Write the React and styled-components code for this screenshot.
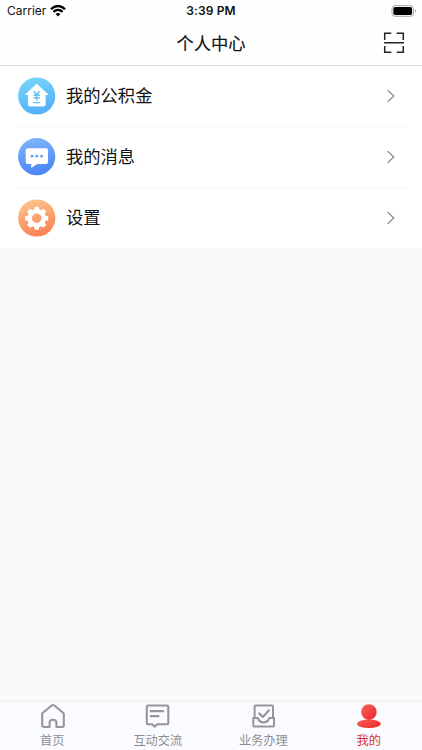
import React from 'react'
import styled, { createGlobalStyle } from 'styled-components';

const GlobalStyle = createGlobalStyle`
    * {
        box-sizing: border-box;
    }
    body {
        margin: 0;
        font-family: Inter, "Noto Sans CJK SC", sans-serif;
        background-color: #fafafa;
    }
    svg {
        display: block;
        flex-shrink: 0;
    }
`;

const Screen = styled.div`
    display: flex;
    flex-direction: column;
    height: 100vh;
    overflow: hidden;
    background-color: #fafafa;
`;

const Header = styled.header`
    height: 66px;
    background-color: #fefefe;
    border-bottom: 1px solid #dcdcdc;
`;

const StatusBar = styled.div`
    display: grid;
    grid-template-columns: 1fr auto 1fr;
    align-items: center;
    height: 22px;
    padding: 0 5px 0 7px;
    color: #111;
    font-size: 12px;
    line-height: 22px;
`;

const Carrier = styled.div`
    display: flex;
    align-items: center;
    gap: 4px;
`;

const Clock = styled.div`
    margin-right: 2px;
    font-weight: 600;
    letter-spacing: 0.15px;
`;

const BatteryWrap = styled.div`
    display: flex;
    justify-content: flex-end;
`;

const NavBar = styled.div`
    display: grid;
    grid-template-columns: 1fr auto 1fr;
    align-items: center;
    height: 43px;
    padding: 0 17px;
    h1 {
        grid-column: 2;
        margin: 0;
        font-size: 17.3px;
        font-weight: 400;
        line-height: 43px;
        color: #111;
        -webkit-text-stroke: 0.15px #111;
    }
    svg {
        justify-self: end;
        margin-bottom: 1px;
    }
`;

const Menu = styled.main`
    flex: 1;
`;

const MenuRow = styled.div`
    display: flex;
    align-items: center;
    height: ${props => props.$last ? '60px' : '61px'};
    margin-left: 18px;
    margin-right: 17px;
    padding-bottom: ${props => props.$last ? '1px' : '0'};
    border-bottom: ${props => props.$last ? 'none' : '1px solid #f5f5f5'};
    span {
        flex: 1;
        margin-left: 10px;
        font-size: 17.3px;
        line-height: 26px;
        color: #111;
    }
`;

const MenuList = styled.div`
    background-color: #fff;
`;

const TabBar = styled.nav`
    display: grid;
    grid-template-columns: repeat(4, 1fr);
    height: 50px;
    border-top: 2px solid #f1f1f3;
    background-color: #fafbfe;
`;

const Tab = styled.div`
    display: flex;
    flex-direction: column;
    align-items: center;
    padding: 1px 1px 0 0;
    font-size: 12.2px;
    line-height: 18px;
    color: ${props => props.$active ? '#d62f2f' : '#8e8e90'};
    svg {
        margin: 0 -1px 3px 0;
    }
`;

function WifiIcon() {
    return (
        <svg width="16" height="12" viewBox="0 0 16 12" fill="none" stroke="#000" strokeWidth="2.3">
            <path d="M1 4.2C5-.1 11-.1 15 4.2" />
            <path d="M3.5 6.9C6.1 4.2 9.9 4.2 12.5 6.9" />
            <path d="M8 11.4L5.6 9C7 7.7 9 7.7 10.4 9Z" fill="#000" stroke="none" />
        </svg>
    )
}

function BatteryIcon() {
    return (
        <svg width="26" height="12" viewBox="0 0 26 12">
            <rect x="1" y="0.7" width="21.5" height="10.6" rx="3" fill="#fff" stroke="#a6a6a6" />
            <rect x="2.4" y="2.1" width="18.7" height="7.8" rx="1.7" fill="#000" />
            <path d="M24 4.2C25.4 4.8 25.4 7.2 24 7.8Z" fill="#a6a6a6" />
        </svg>
    )
}

function ScanIcon() {
    return (
        <svg width="22" height="22" viewBox="0 0 22 22" fill="none" stroke="#222" strokeWidth="1.5">
            <path d="M1.7 8V1.2H8.3M13.7 1.2H20.3V8M1.7 14V20.3H8.3M13.7 20.3H20.3V14M1 10.7H21" />
        </svg>
    )
}

function FundIcon() {
    return (
        <svg width="38" height="38" viewBox="0 0 38 38">
            <defs>
                <linearGradient id="fund" x1="0" y1="0" x2="0.3" y2="1">
                    <stop offset="0" stopColor="#78d8f8" />
                    <stop offset="1" stopColor="#55b2f8" />
                </linearGradient>
            </defs>
            <circle cx="18.7" cy="19" r="18.6" fill="url(#fund)" />
            <path d="M18.7 7.2L30 17.4H27.2V27.4Q27.2 29 25.6 29H12Q10.4 29 10.4 27.4V17.4H7.6Z" fill="#fff" stroke="#fff" strokeWidth="0.8" strokeLinejoin="round" />
            <path d="M15.8 14.3L18.7 17.8L21.6 14.3M18.7 17.8V23.4M15.5 18.3H21.9M15.5 20.8H21.9M15 25.6H22.4" fill="none" stroke="#62c0f5" strokeWidth="1.4" />
        </svg>
    )
}

function MessageIcon() {
    return (
        <svg width="38" height="38" viewBox="0 0 38 38">
            <defs>
                <linearGradient id="message" x1="0" y1="0" x2="0.2" y2="1">
                    <stop offset="0" stopColor="#80b8fb" />
                    <stop offset="1" stopColor="#4c87f6" />
                </linearGradient>
            </defs>
            <circle cx="18.7" cy="18.7" r="18.6" fill="url(#message)" />
            <path d="M9.7 10.2H28Q30 10.2 30 12.2V23.9Q30 25.9 28 25.9H19.3L13.2 29.9V25.9H9.7Q7.7 25.9 7.7 23.9V12.2Q7.7 10.2 9.7 10.2Z" fill="#fff" />
            <g fill="#659ef8">
                <circle cx="14" cy="18.2" r="1.4" />
                <circle cx="18.8" cy="18.2" r="1.4" />
                <circle cx="23.6" cy="18.2" r="1.4" />
            </g>
        </svg>
    )
}

const TEETH = [0, 45, 90, 135, 180, 225, 270, 315];

function SettingsIcon() {
    return (
        <svg width="38" height="38" viewBox="0 0 38 38">
            <defs>
                <linearGradient id="settings" x1="0" y1="0" x2="0.3" y2="1">
                    <stop offset="0" stopColor="#fbca91" />
                    <stop offset="1" stopColor="#fa8656" />
                </linearGradient>
            </defs>
            <circle cx="18.7" cy="19" r="18.6" fill="url(#settings)" />
            <circle cx="18.7" cy="19.2" r="7" fill="none" stroke="#fff" strokeWidth="4.4" />
            {TEETH.map(angle => (
                <path key={angle} d="M16 11.5L16.7 7.7H20.7L21.4 11.5Z" fill="#fff" transform={`rotate(${angle} 18.7 19.2)`} />
            ))}
        </svg>
    )
}

function ChevronIcon() {
    return (
        <svg width="18" height="14" viewBox="0 0 18 14" fill="none" stroke="#858585" strokeWidth="1.2">
            <path d="M0.7 1.1L6.8 7L0.7 12.9" />
        </svg>
    )
}

function HomeIcon() {
    return (
        <svg width="26" height="26" viewBox="0 0 26 26" fill="none" stroke="#969698" strokeWidth="2.1" strokeLinejoin="round">
            <path d="M2.2 11.2Q2.2 10.4 2.9 9.8L12 2.3Q13 1.6 14 2.3L23.1 9.8Q23.8 10.4 23.8 11.2V22.3Q23.8 24 22.1 24H16.4V19.8Q16.4 16.7 13 16.7Q9.6 16.7 9.6 19.8V24H3.9Q2.2 24 2.2 22.3Z" />
        </svg>
    )
}

function ChatIcon() {
    return (
        <svg width="26" height="26" viewBox="0 0 26 26" fill="none" stroke="#969698" strokeWidth="2.1" strokeLinejoin="round">
            <path d="M3.3 2.5H21.8Q23.3 2.5 23.3 4V19.8Q23.3 21.3 21.8 21.3H12.4L9.7 23.6L7.1 21.3H3.3Q1.8 21.3 1.8 19.8V4Q1.8 2.5 3.3 2.5Z" />
            <path d="M4.9 8.1H18.9M4.9 13.1H14.3" />
        </svg>
    )
}

function BusinessIcon() {
    return (
        <svg width="26" height="26" viewBox="0 0 26 26" fill="none" stroke="#969698" strokeWidth="2" strokeLinejoin="round">
            <path d="M3.6 15.1V3.6Q3.6 2.5 4.7 2.5H20.9Q22 2.5 22 3.6V15.1" />
            <path d="M7.6 9.9L11.8 13.9L18.5 6.8" strokeWidth="2.2" />
            <path d="M2.3 14.9H6.9Q8.3 19.4 12.6 19.4Q16.9 19.4 18.3 14.9H23V22.4Q23 23.6 21.8 23.6H3.5Q2.3 23.6 2.3 22.4Z" />
        </svg>
    )
}

function UserIcon() {
    return (
        <svg width="26" height="26" viewBox="0 0 26 26">
            <defs>
                <linearGradient id="user" x1="0" y1="0" x2="1" y2="1">
                    <stop offset="0" stopColor="#fb6558" />
                    <stop offset="1" stopColor="#ed2428" />
                </linearGradient>
            </defs>
            <ellipse cx="12.9" cy="20.7" rx="11.9" ry="4.3" fill="url(#user)" />
            <circle cx="12.9" cy="9.1" r="7.8" fill="url(#user)" />
        </svg>
    )
}

const menuItems = [
    { label: '我的公积金', Icon: FundIcon },
    { label: '我的消息', Icon: MessageIcon },
    { label: '设置', Icon: SettingsIcon },
];

const tabs = [
    { label: '首页', Icon: HomeIcon },
    { label: '互动交流', Icon: ChatIcon },
    { label: '业务办理', Icon: BusinessIcon },
    { label: '我的', Icon: UserIcon, active: true },
];

export default function App() {
  return (
    <Screen>
        <GlobalStyle />
        <Header>
            <StatusBar>
                <Carrier>Carrier <WifiIcon /></Carrier>
                <Clock>3:39 PM</Clock>
                <BatteryWrap><BatteryIcon /></BatteryWrap>
            </StatusBar>
            <NavBar>
                <h1>个人中心</h1>
                <ScanIcon />
            </NavBar>
        </Header>
        <Menu>
            <MenuList>
                {menuItems.map(({ label, Icon }, i) => (
                    <MenuRow key={label} $last={i === menuItems.length - 1}>
                        <Icon />
                        <span>{label}</span>
                        <ChevronIcon />
                    </MenuRow>
                ))}
            </MenuList>
        </Menu>
        <TabBar>
            {tabs.map(({ label, Icon, active }) => (
                <Tab key={label} $active={active}>
                    <Icon />
                    {label}
                </Tab>
            ))}
        </TabBar>
    </Screen>
  )
}
